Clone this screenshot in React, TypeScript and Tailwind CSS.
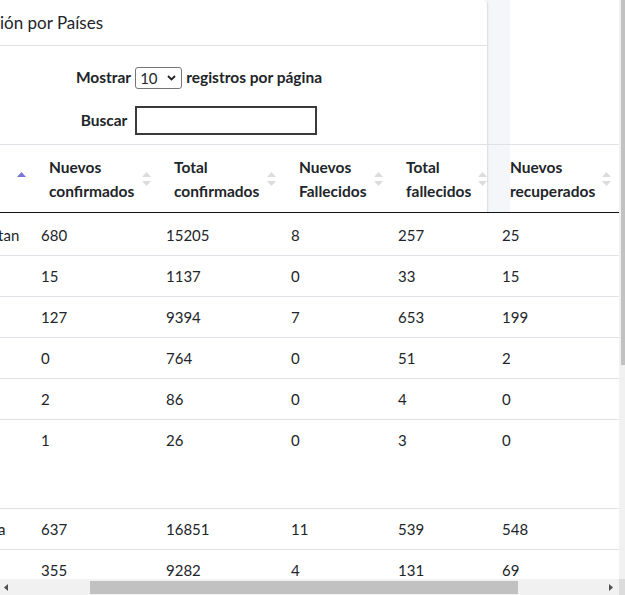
import React from 'react';

// Tabla de casos por país — vista desplazada horizontalmente (scrollX)

type Row = {
  pais: string;
  nuevosConf: number;
  totalConf: number;
  nuevosFall: number;
  totalFall: number;
  nuevosRec: number;
  totalRec: number;
};

const ROWS: Row[] = [
  { pais: 'Afghanistan', nuevosConf: 680, totalConf: 15205, nuevosFall: 8, totalFall: 257, nuevosRec: 25, totalRec: 1328 },
  { pais: 'Albania', nuevosConf: 15, totalConf: 1137, nuevosFall: 0, totalFall: 33, nuevosRec: 15, totalRec: 872 },
  { pais: 'Algeria', nuevosConf: 127, totalConf: 9394, nuevosFall: 7, totalFall: 653, nuevosRec: 199, totalRec: 5748 },
  { pais: 'Andorra', nuevosConf: 0, totalConf: 764, nuevosFall: 0, totalFall: 51, nuevosRec: 2, totalRec: 692 },
  { pais: 'Angola', nuevosConf: 2, totalConf: 86, nuevosFall: 0, totalFall: 4, nuevosRec: 0, totalRec: 18 },
  { pais: 'Antigua and Barbuda', nuevosConf: 1, totalConf: 26, nuevosFall: 0, totalFall: 3, nuevosRec: 0, totalRec: 20 },
  { pais: 'Argentina', nuevosConf: 637, totalConf: 16851, nuevosFall: 11, totalFall: 539, nuevosRec: 548, totalRec: 5336 },
  { pais: 'Armenia', nuevosConf: 355, totalConf: 9282, nuevosFall: 4, totalFall: 131, nuevosRec: 69, totalRec: 3386 },
];

const COLS = [
  { label: 'País', w: 'w-[100px]', active: true },
  { label: 'Nuevos confirmados', w: 'w-[125px]' },
  { label: 'Total confirmados', w: 'w-[125px]' },
  { label: 'Nuevos Fallecidos', w: 'w-[107px]' },
  { label: 'Total fallecidos', w: 'w-[104px]' },
  { label: 'Nuevos recuperados', w: 'w-[124px]' },
  { label: 'Total recuperados', w: 'w-[130px]' },
];

function SortIcon({ active }: { active?: boolean }) {
  return (
    <svg width="9" height="14" viewBox="0 0 9 14" className="shrink-0" aria-hidden="true">
      <polygon points="4.5,0 9,5 0,5" fill={active ? '#7878d8' : '#dcdcdc'} />
      {!active && <polygon points="0,9 9,9 4.5,14" fill="#dcdcdc" />}
    </svg>
  );
}

export default function App() {
  return (
    <div className="w-[625px] h-[595px] overflow-hidden flex flex-col bg-white text-[#212529] font-['Lato',sans-serif]">
      <div className="flex flex-1 min-h-0">
        {/* contenido desplazado */}
        <div className="flex-1 overflow-hidden flex">
          {/* Card principal */}
          <div className="relative z-10 w-[556px] shrink-0 -ml-[69px] bg-white rounded-tr-[4px] shadow-[0_0_1px_rgba(0,0,0,0.125),0_1px_3px_rgba(0,0,0,0.2)]">
            <div className="h-[46px] border-b border-[#e0e0e0] flex items-center pl-[69px]">
              <h3 className="text-[17px] leading-6 flex">
                <span className="w-0 flex justify-end">
                  <span className="shrink-0">Distribuc</span>
                </span>
                <span>ión por Países</span>
              </h3>
            </div>

            {/* controles DataTables */}
            <div className="w-[536px] flex flex-col items-center pt-[20px] pb-[9px] text-[15.5px] font-bold">
              <div className="h-6 flex items-center">
                <span>Mostrar</span>
                <div className="mx-[4px] w-[47px] h-[22px] border border-[#767676] rounded-[3px] flex items-center justify-between pl-[4px] pr-[5px] font-normal text-[15px]">
                  <span>10</span>
                  <svg width="9" height="6" viewBox="0 0 9 6" aria-hidden="true">
                    <path d="M1 1l3.5 3.5L8 1" fill="none" stroke="#222" strokeWidth="1.8" />
                  </svg>
                </div>
                <span>registros por página</span>
              </div>
              <div className="mt-4 h-[29px] flex items-center">
                <span>Buscar</span>
                <div className="ml-2 w-[182px] h-[29px] border-2 border-[#3a3a3a]" />
              </div>
            </div>

            <table className="table-fixed border-separate border-spacing-0 w-[815px] text-[15px] leading-6">
              <colgroup>
                {COLS.map(c => (
                  <col key={c.label} className={c.w} />
                ))}
              </colgroup>
              <thead>
                <tr>
                  {COLS.map(c => (
                    <th
                      key={c.label}
                      className="border-t border-b border-t-[#dee2e6] border-b-[#111] pt-[10px] pb-[9px] pl-[18px] pr-[5px] text-left text-[15.5px] font-bold align-middle"
                    >
                      <div className="flex items-center justify-between gap-1">
                        <span className={c.active ? 'invisible' : ''}>{c.label}</span>
                        <SortIcon active={c.active} />
                      </div>
                    </th>
                  ))}
                </tr>
              </thead>
              <tbody>
                {ROWS.map((r, idx) => (
                  <tr key={r.pais} className="bg-white">
                    {[
                      r.pais === 'Antigua and Barbuda' ? (
                        <>
                          Antigua
                          <br />
                          and
                          <br />
                          Barbuda
                        </>
                      ) : (
                        r.pais
                      ),
                      r.nuevosConf,
                      r.totalConf,
                      r.nuevosFall,
                      r.totalFall,
                      r.nuevosRec,
                      r.totalRec,
                    ].map((v, i) => (
                      <td
                        key={i}
                        className={
                          idx === 0
                            ? 'px-[10px] pt-[10px] pb-2 align-top border-b border-[#dee2e6] whitespace-nowrap'
                            : 'px-[10px] py-2 align-top border-b border-[#dee2e6] whitespace-nowrap'
                        }
                      >
                        {v}
                      </td>
                    ))}
                  </tr>
                ))}
              </tbody>
            </table>
          </div>

          {/* separación entre columnas */}
          <div className="w-[23px] shrink-0 bg-[#f4f6f9]" />
          <div className="flex-1 bg-white" />
        </div>

        {/* scrollbar vertical */}
        <div className="w-[6px] shrink-0 bg-[#f1f1f1] pl-[2px]">
          <div className="h-[365px] bg-[#c1c1c1]" />
        </div>
      </div>

      {/* scrollbar horizontal */}
      <div className="h-[16px] shrink-0 flex">
        <div className="flex-1 bg-[#f1f1f1] flex">
          <div className="w-[17px] pl-[4px] flex items-center">
            <svg width="4" height="7" viewBox="0 0 4 7" aria-hidden="true">
              <polygon points="4,0 4,7 0,3.5" fill="#505050" />
            </svg>
          </div>
          <div className="ml-[73px] mt-[2px] w-[428px] h-[13px] bg-[#c1c1c1]" />
          <div className="flex-1" />
          <div className="w-[16px] flex items-center justify-center">
            <svg width="4" height="7" viewBox="0 0 4 7" aria-hidden="true">
              <polygon points="0,0 4,3.5 0,7" fill="#505050" />
            </svg>
          </div>
        </div>
        <div className="w-[6px] bg-[#dcdcdc]" />
      </div>
    </div>
  );
}
